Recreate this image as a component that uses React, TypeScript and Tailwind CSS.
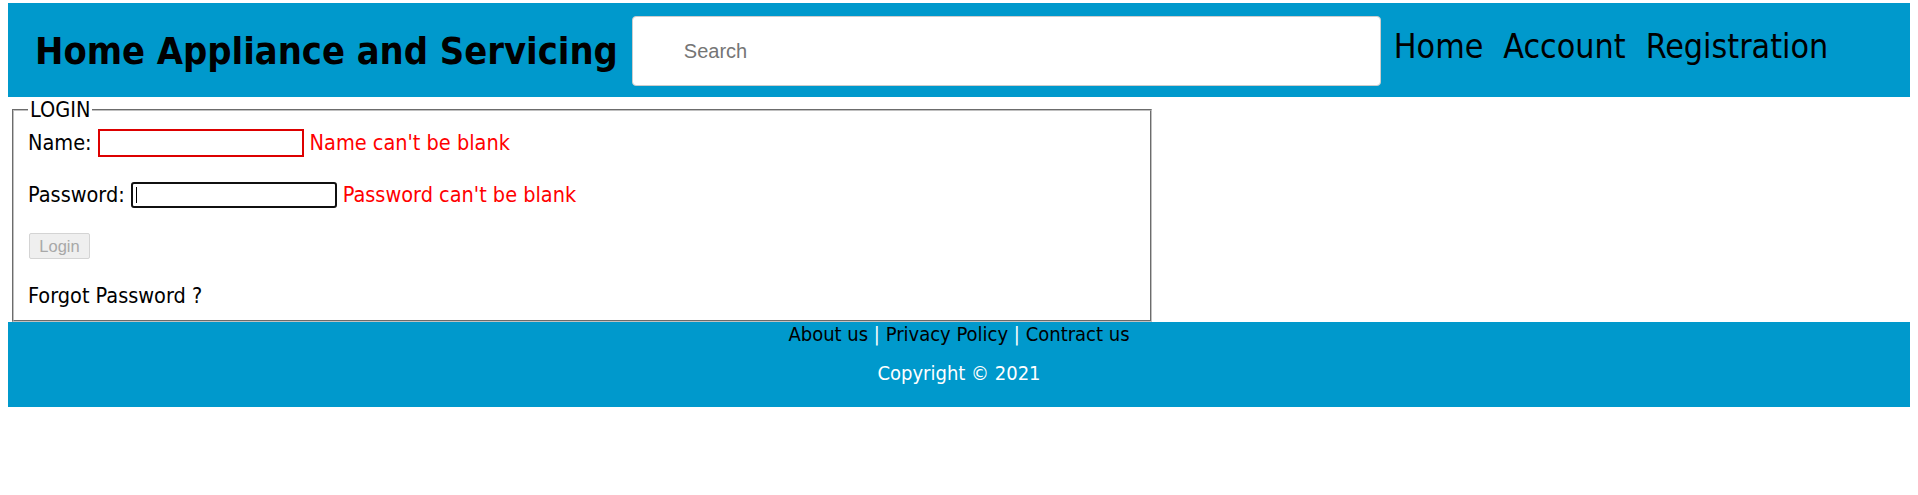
import { type ReactNode } from 'react'

export default function App(): ReactNode {
  return (
    <div className="font-['DejaVu_Sans_Condensed','DejaVu_Sans',sans-serif] text-black">
      {/* header */}
      <div className="px-2 pt-[3px]">
        <header className="flex h-[94px] items-start bg-[#0099cc]">
          <h1 className="ml-[27px] mt-[26px] shrink-0 text-[37.7px] font-bold leading-[44px]">
            Home Appliance and Servicing
          </h1>
          <input
            type="text"
            placeholder="Search"
            className="ml-[14px] mt-[13px] h-[70px] w-[749px] shrink-0 rounded-[4px] border border-[#cccccc] bg-white pl-[51px] font-['Liberation_Sans',Arial,sans-serif] text-[20px] outline-none placeholder:text-[#757575]"
          />
          <nav className="ml-[13px] mt-[25px] flex gap-[20px] text-[33.7px] leading-[38px]">
            <a>Home</a>
            <a>Account</a>
            <a>Registration</a>
          </nav>
        </header>
      </div>

      {/* login form */}
      <div className="px-[12px]">
        <fieldset className="w-[1140px] border-2 border-[#c0c0c0] [border-style:groove] pb-[12px] pl-[14px] text-[21.5px]">
          <legend className="px-[2px] leading-[25px]">LOGIN</legend>
          <div className="mt-[7px] flex h-[28px] items-center gap-[6px]">
            <label>Name:</label>
            <input type="text" className="h-[28px] w-[206px] border-2 border-[#dd0000] bg-white" />
            <span className="text-[#ff0000]">Name can't be blank</span>
          </div>
          <div className="mt-[25px] flex h-[26px] items-center gap-[6px]">
            <label>Password:</label>
            <div className="relative">
              <input type="password" className="block h-[26px] w-[206px] rounded-[3px] border-2 border-[#101010] bg-white" />
              <span className="absolute left-[5px] top-[5px] h-[16px] w-px bg-black" />
            </div>
            <span className="text-[#ff0000]">Password can't be blank</span>
          </div>
          <div className="mt-[25px] flex">
            <button
              disabled
              className="ml-px h-[26px] w-[61px] rounded-[2px] border border-[#d4d4d4] bg-[#efefef] font-['Liberation_Sans',Arial,sans-serif] text-[16.5px] text-[#a8a8a8]"
            >
              Login
            </button>
          </div>
          <p className="mt-[24px] leading-[25px]">Forgot Password ?</p>
        </fieldset>
      </div>

      {/* footer */}
      <div className="px-2">
        <footer className="flex h-[85px] flex-col items-center bg-[#0099cc] text-[20px]">
          <div className="leading-[24px]">
            <a>About us</a> <span className="text-white">|</span> <a>Privacy Policy</a>{' '}
            <span className="text-white">|</span> <a>Contract us</a>
          </div>
          <div className="mt-[15px] leading-[24px] text-white">Copyright © 2021</div>
        </footer>
      </div>
    </div>
  )
}
